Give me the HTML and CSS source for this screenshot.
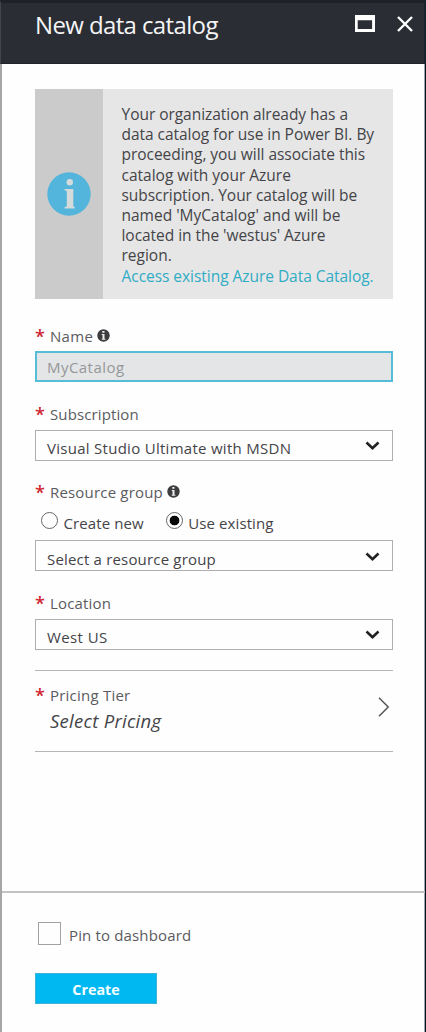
FILE: index.html
```html
<!DOCTYPE html>
<html lang="en">
<head>
<meta charset="utf-8">
<title>New data catalog</title>
<link rel="stylesheet" href="styles.css">
</head>
<body>
<main class="blade">
  <header class="header">
    <h1 class="title">New data catalog</h1>
    <svg class="window-icon" width="20" height="17" viewBox="0 0 20 17"><path d="M0 0h20v17H0zM2.7 5.3v8.8h14.4V5.3z" fill="#fff" fill-rule="evenodd"/></svg>
    <svg class="close-icon" width="18" height="18" viewBox="0 0 18 18"><path d="M2 2l14 14M16 2L2 16" stroke="#fff" stroke-width="2.4" fill="none"/></svg>
  </header>
  <div class="content">
    <section class="notice">
      <div class="notice-side">
        <svg width="44" height="44" viewBox="0 0 44 44"><circle cx="22" cy="22" r="21.7" fill="#53b5dc"/><circle cx="22.8" cy="10.3" r="3.2" fill="#d5dadb"/><path d="M17.5 17h8.8v17.3l1.4 1v1.2H17.6v-1.2l2.2-1V19l-2.3-.8z" fill="#d5dadb"/></svg>
      </div>
      <p class="notice-text">
        <span>Your organization already has a</span><br>
        <span>data catalog for use in Power BI. By</span><br>
        <span>proceeding, you will associate this</span><br>
        <span class="loose">catalog with your Azure</span><br>
        <span>subscription. Your catalog will be</span><br>
        <span class="loose">named 'MyCatalog' and will be</span><br>
        <span>located in the 'westus' Azure</span><br>
        <span class="loose">region.</span><br>
        <a class="link">Access existing Azure Data Catalog.</a>
      </p>
    </section>

    <div class="label name-label"><span class="star">*</span><span class="t-name">Name</span>
      <svg class="info" width="13" height="13" viewBox="0 0 13 13"><circle cx="6.5" cy="6.5" r="6.2" fill="#3d3d40"/><path d="M5.3 2.1h2.2v1.7H5.3zM4.7 5h2.8v4.7h.9v1H4.7v-1h.8V6h-.8z" fill="#eee"/></svg>
    </div>
    <div class="field disabled"><span class="t-catalog">MyCatalog</span></div>

    <div class="label"><span class="star">*</span><span class="t-sub">Subscription</span></div>
    <div class="field"><span class="t-visual">Visual Studio Ultimate with MSDN</span>
      <svg class="chevron" width="15" height="10" viewBox="0 0 15 10"><path d="M1.5 1.5l6 5.7 6-5.7" stroke="#222" stroke-width="2.6" fill="none"/></svg></div>

    <div class="label resource-label"><span class="star">*</span><span class="t-res">Resource group</span>
      <svg class="info" width="13" height="13" viewBox="0 0 13 13"><circle cx="6.5" cy="6.5" r="6.2" fill="#3d3d40"/><path d="M5.3 2.1h2.2v1.7H5.3zM4.7 5h2.8v4.7h.9v1H4.7v-1h.8V6h-.8z" fill="#eee"/></svg>
    </div>
    <div class="radios">
      <span class="radio"></span><span class="radio-text">Create new</span>
      <span class="radio checked"></span><span class="radio-text">Use existing</span>
    </div>
    <div class="field group"><span class="t-select">Select a resource group</span>
      <svg class="chevron" width="15" height="10" viewBox="0 0 15 10"><path d="M1.5 1.5l6 5.7 6-5.7" stroke="#222" stroke-width="2.6" fill="none"/></svg></div>

    <div class="label"><span class="star">*</span><span class="t-loc">Location</span></div>
    <div class="field"><span class="t-west">West US</span>
      <svg class="chevron" width="15" height="10" viewBox="0 0 15 10"><path d="M1.5 1.5l6 5.7 6-5.7" stroke="#222" stroke-width="2.6" fill="none"/></svg></div>

    <section class="pricing">
      <span class="star">*</span>
      <div class="pricing-text">
        <div class="t-tier">Pricing Tier</div>
        <div class="pricing-value">Select Pricing</div>
      </div>
      <svg class="arrow" width="12" height="20" viewBox="0 0 12 20"><path d="M1 .8l9.2 9.2L1 19.2" stroke="#555" stroke-width="1.5" fill="none"/></svg>
    </section>
  </div>
  <footer class="footer">
    <div class="pin"><span class="checkbox"></span><span class="t-pin">Pin to dashboard</span></div>
    <button class="create">Create</button>
  </footer>
</main>
</body>
</html>
```
FILE: styles.css
```css
* { box-sizing: border-box; }
body {
  margin: 0;
  font-family: "Open Sans", "Noto Sans", sans-serif;
  font-size: 15px;
  color: #444448;
}
.blade {
  width: 426px;
  height: 1032px;
  display: flex;
  flex-direction: column;
  background: linear-gradient(to right, #a6a6a6 2px, #fefefe 2px, #fefefe 424px, #9aa3ae 424px, #9aa3ae 425px, #080f1c 425px);
}
svg { display: block; flex: none; }
span, .t-tier { white-space: nowrap; }
.header {
  flex: none;
  height: 64px;
  display: flex;
  align-items: flex-start;
  padding-left: 35px;
  background: #2a2d33;
  border-top: 3px solid #1e2127;
  border-left: 1px solid #42454a;
  border-right: 2px solid #18212c;
  border-bottom: 1px solid #202328;
}
.title {
  margin: 5px 0 0 -1px;
  font-size: 24px;
  line-height: 33px;
  font-weight: 400;
  letter-spacing: -0.62px;
  color: #f5f5f7;
  white-space: nowrap;
}
.window-icon { margin: 12px 21px 0 auto; }
.close-icon { margin: 12px 10px 0 0; }
.content { flex: 1; padding: 25px 33px 0 35px; }
.notice { display: flex; height: 210px; background: #e6e6e6; }
.notice-side {
  width: 68px;
  flex: none;
  display: flex;
  align-items: center;
  justify-content: center;
  background: #cbcbcb;
}
.notice-text {
  margin: 15px 0 0 18.5px;
  font-size: 15.5px;
  line-height: 20.2px;
  letter-spacing: -0.04px;
  white-space: nowrap;
}
.loose { letter-spacing: 0; }
.link { color: #30acc5; }
.label {
  display: flex;
  height: 48px;
  padding-top: 22px;
  line-height: 20px;
  color: #5b5b5f;
}
.name-label { height: 52px; padding-top: 27px; }
.star {
  width: 15px;
  flex: none;
  color: #cf2430;
  font-size: 18px;
  font-weight: 600;
  line-height: 20px;
}
.t-name { letter-spacing: 0.3px; }
.t-catalog { letter-spacing: 0.45px; }
.t-sub { letter-spacing: 0.12px; }
.t-visual { letter-spacing: 0.28px; }
.t-res { letter-spacing: 0.18px; }
.t-select { letter-spacing: 0.18px; }
.t-loc { letter-spacing: 0.18px; }
.t-west { letter-spacing: 0.4px; }
.t-tier { letter-spacing: 0.22px; }
.t-pin { letter-spacing: 0.15px; }
.info { margin: 3px 0 0 4px; }
.field {
  height: 31px;
  display: flex;
  justify-content: space-between;
  padding: 7px 12px 0 11px;
  border: 1px solid #aeaeb0;
  line-height: 20px;
  background: #fefefe;
}
.field.group { padding-top: 8px; }
.field.disabled {
  padding: 4px 10px 0;
  border: 2px solid #55bdd7;
  background: #e3e5e6;
  color: #969799;
}
.chevron { margin-top: 3px; }
.field.group .chevron { margin-top: 3px; }
.resource-label { height: 49px; padding-top: 21px; }
.radios { display: flex; height: 31px; padding-left: 6px; margin-top: -1px; }
.radio {
  width: 17px;
  height: 17px;
  flex: none;
  margin-top: 3px;
  border: 1px solid #666;
  border-radius: 50%;
}
.radio.checked { margin-left: 22px; background: radial-gradient(circle, #080808 4.5px, transparent 5.2px); }
.radio-text { margin: 4px 0 0 5.5px; line-height: 20px; letter-spacing: 0.1px; }
.pricing {
  display: flex;
  height: 82px;
  margin-top: 20px;
  padding-top: 14px;
  border-top: 1px solid #b5b5b5;
  border-bottom: 1px solid #b5b5b5;
}
.pricing-text { flex: 1; line-height: 20px; color: #5b5b5f; }
.pricing-value {
  margin-top: 3px;
  font-size: 18.5px;
  line-height: 26px;
  font-style: italic;
  letter-spacing: 0.28px;
  color: #444448;
}
.arrow { margin: 12px 3px 0 0; }
.footer {
  height: 141px;
  margin: 0 1px 0 2px;
  padding: 29px 0 0 33px;
  border-top: 2px solid #c3c3c3;
}
.pin { display: flex; height: 51px; padding-left: 3px; color: #5b5b5f; }
.checkbox { width: 23px; height: 23px; border: 1px solid #a2a2a2; margin-right: 8px; }
.t-pin { line-height: 20px; margin-top: 3px; }
.create {
  display: block;
  width: 122px;
  height: 31px;
  padding: 1px 0 0;
  border: 1px solid #3db1d6;
  background: #00b8f1;
  color: #f4fdff;
  font: 700 14.3px "Open Sans", "Noto Sans", sans-serif;
}
```
